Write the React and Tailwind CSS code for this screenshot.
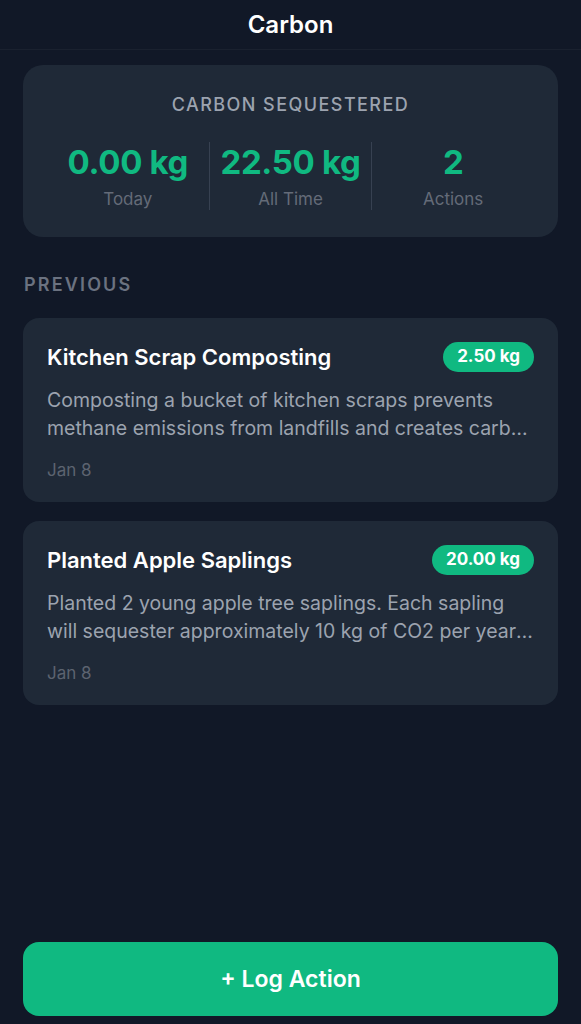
import React from "react";

const items = [
  {
    title: "Kitchen Scrap Composting",
    amount: "2.50 kg",
    line1: "Composting a bucket of kitchen scraps prevents",
    line2: "methane emissions from landfills and creates carbon-rich soil that stores carbon for years.",
    date: "Jan 8",
  },
  {
    title: "Planted Apple Saplings",
    amount: "20.00 kg",
    line1: "Planted 2 young apple tree saplings. Each sapling",
    line2: "will sequester approximately 10 kg of CO2 per year as it grows.",
    date: "Jan 8",
  },
];

export default function App() {
  return (
    <div
      className="flex min-h-screen flex-col bg-[#111827] text-white"
      style={{ fontFamily: "Inter, 'Noto Sans', sans-serif" }}
    >
      <header className="flex h-[50px] items-center justify-center border-b border-white/[0.04] bg-[#111827]">
        <h1 className="text-[24px] font-semibold">Carbon</h1>
      </header>

      <main className="flex flex-1 flex-col px-[23px] pt-[15px]">
        <section className="rounded-[20px] bg-[#1f2937] px-6 pb-[27px] pt-[28px]">
          <div className="text-center text-[18px] font-medium leading-6 tracking-[0.08em] text-[#9ca3af]">
            CARBON SEQUESTERED
          </div>
          <div className="mt-[25px] flex">
            {[
              ["0.00 kg", "Today"],
              ["22.50 kg", "All Time"],
              ["2", "Actions"],
            ].map(([v, l], i) => (
              <div
                key={l}
                className={`flex flex-1 flex-col items-center ${i > 0 ? "border-l border-[#374151]" : ""}`}
              >
                <div className="text-[33px] font-bold leading-10 tracking-[-0.01em] text-[#10b981]">{v}</div>
                <div className="mt-[6px] text-[17px] leading-[22px] text-[#646b78]">{l}</div>
              </div>
            ))}
          </div>
        </section>

        <div className="mt-[36px] pl-px text-[18px] font-semibold leading-6 tracking-[0.12em] text-[#6b7280]">
          PREVIOUS
        </div>

        <div className="mt-[21px] flex flex-col gap-[19px]">
          {items.map((it) => (
            <article key={it.title} className="rounded-[16px] bg-[#1f2937] px-6 pb-5 pt-6">
              <div className="flex h-[30px] items-center justify-between">
                <h2 className="text-[22px] font-semibold leading-[30px] text-white">{it.title}</h2>
                <span className="flex h-[30px] items-center rounded-full bg-[#10b981] px-[14px] text-[17px] font-bold text-white">
                  {it.amount}
                </span>
              </div>
              <div className="mt-[14px] text-[19.5px] leading-[28px] text-[#9ca3af]">
                <div className="truncate">{it.line1}</div>
                <div className="truncate">{it.line2}</div>
              </div>
              <div className="mt-4 text-[17px] leading-6 text-[#5c6370]">{it.date}</div>
            </article>
          ))}
        </div>

        <div className="mt-auto pb-2 pt-6">
          <button className="flex h-[74px] w-full items-center justify-center rounded-[16px] bg-[#10b981] text-[23px] font-semibold text-white">
            + Log Action
          </button>
        </div>
      </main>
    </div>
  );
}
